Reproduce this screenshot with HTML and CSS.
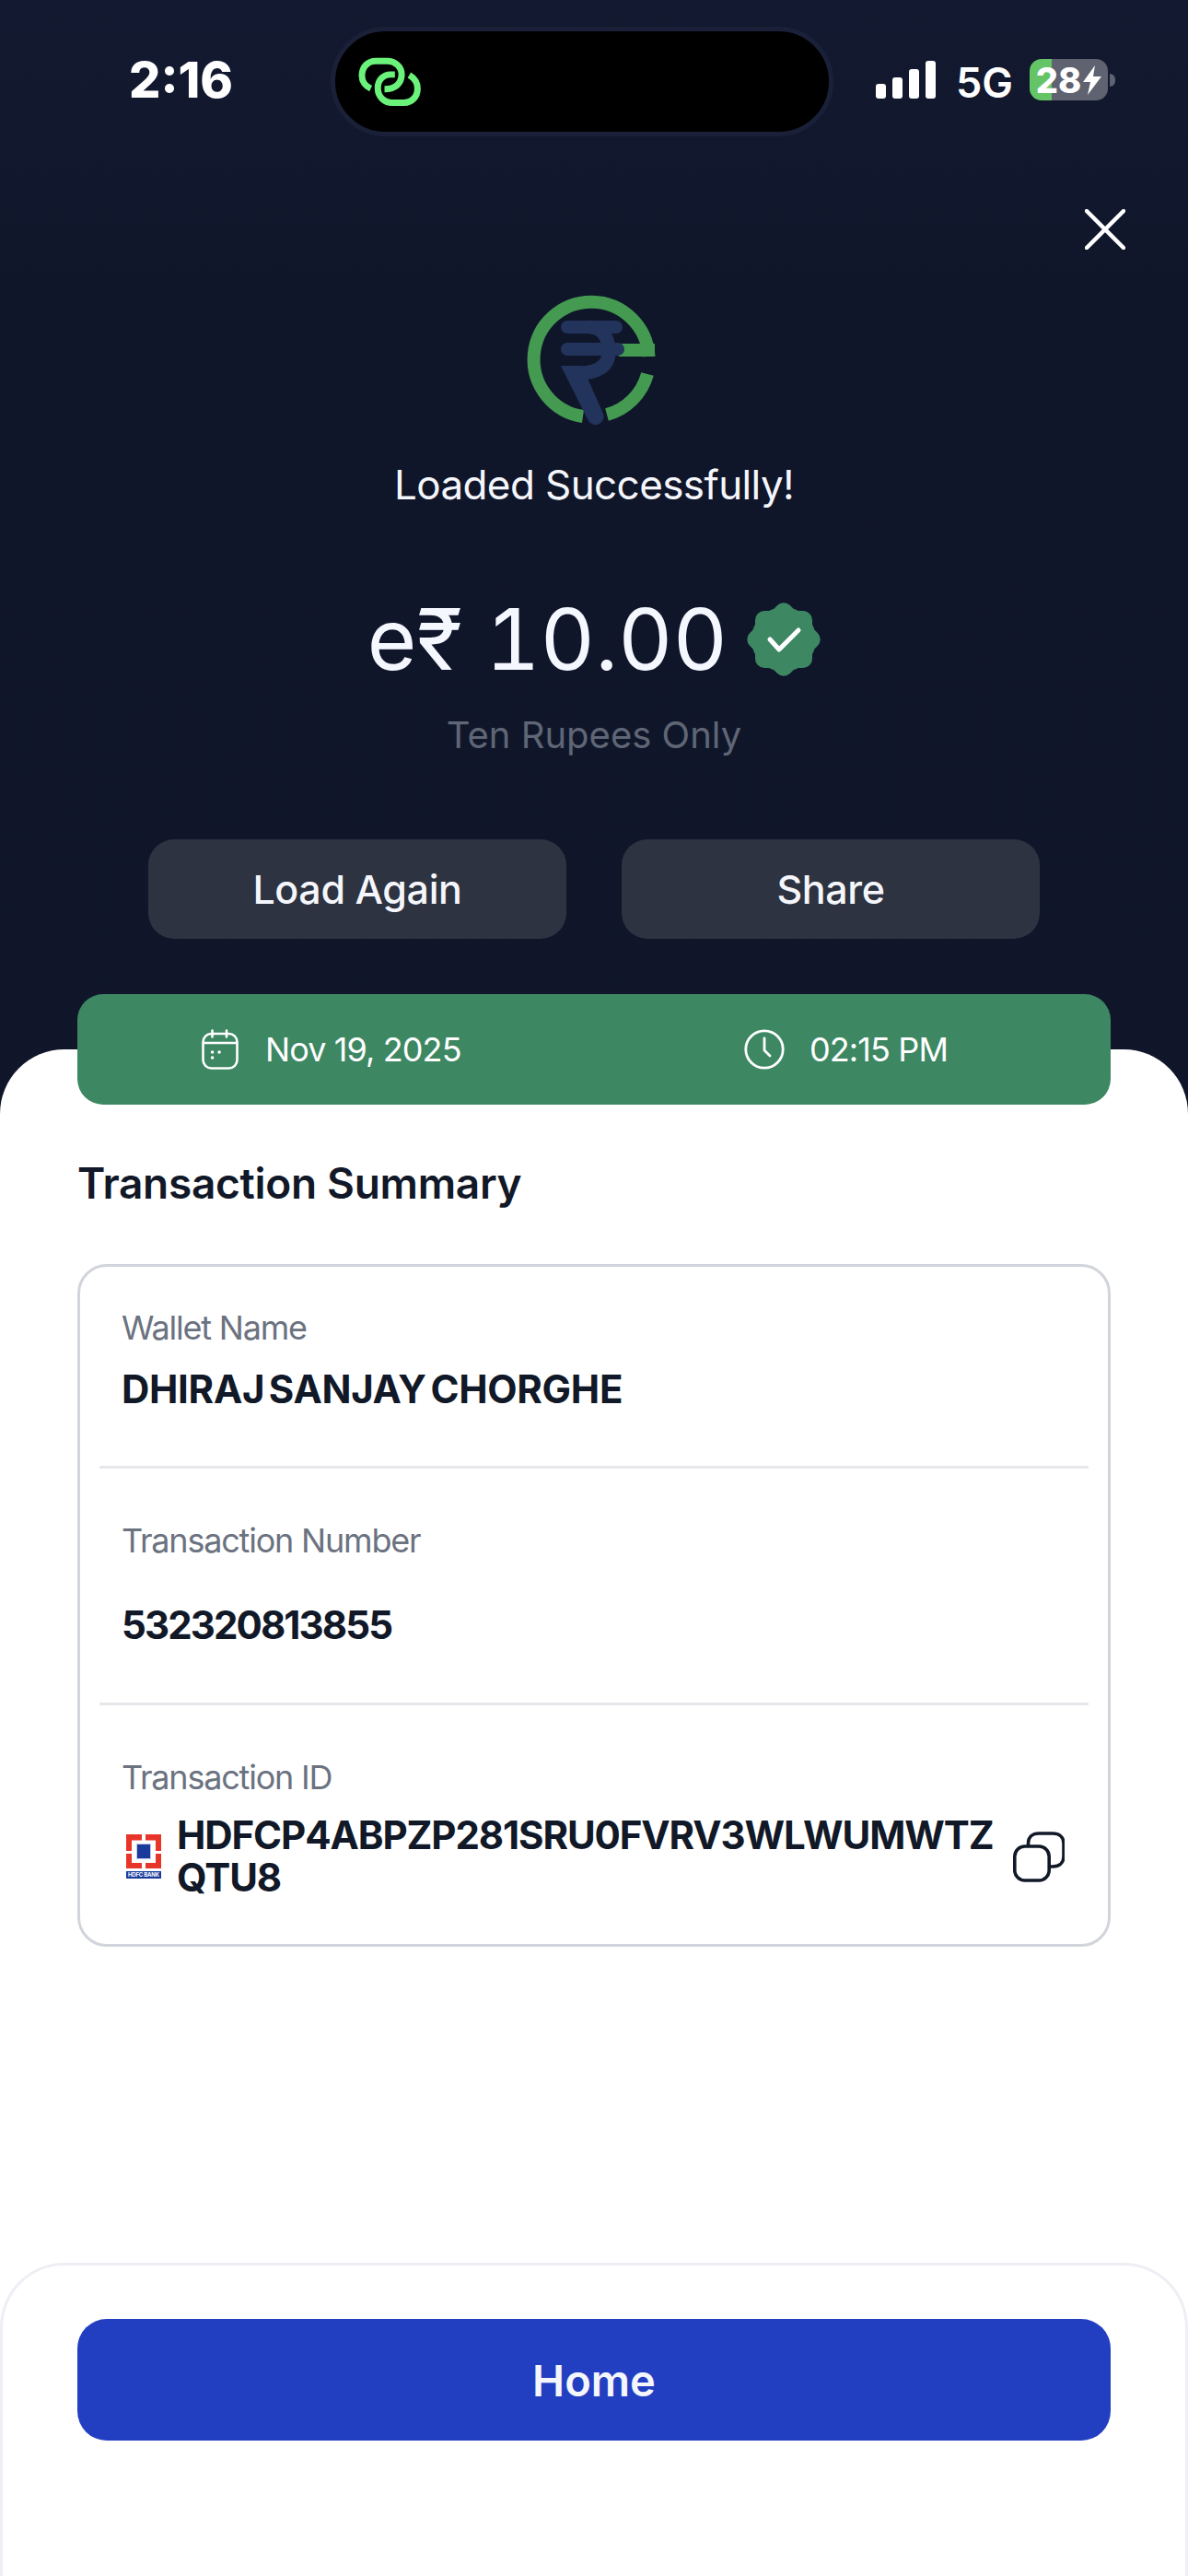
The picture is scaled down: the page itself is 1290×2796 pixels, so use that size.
FILE: index.html
```html
<!DOCTYPE html>
<html lang="en">

<head>
    <meta charset="UTF-8">
    <meta name="viewport" content="width=device-width, initial-scale=1.0">
    <title>Loaded Successfully</title>
    <link rel="stylesheet" href="styles.css">
</head>

<body>
    <div class="screen">
        <!-- Status bar -->
        <div class="status-bar">
            <span class="time">2:16</span>
            <div class="island">
                <svg class="link-icon" viewBox="140 120 220 170" fill="none" stroke="#6bf27a" stroke-width="21">
                    <path d="M187 228C170 220 158 204 158 186C158 158 176 138 204 138H240C268 138 288 158 288 182C288 210 268 230 232 230" />
                    <path d="M266 182H252C228 182 210 200 210 226C210 254 230 274 258 274H296C322 274 340 254 340 228C340 210 330 194 313 184" />
                </svg>
            </div>
            <div class="status-right">
                <div class="signal">
                    <span class="bar bar-1"></span>
                    <span class="bar bar-2"></span>
                    <span class="bar bar-3"></span>
                    <span class="bar bar-4"></span>
                </div>
                <span class="network">5G</span>
                <div class="battery">
                    <div class="battery-body">
                        <span class="battery-level">28</span>
                        <svg class="bolt" viewBox="0 0 20 32" fill="#fff">
                            <path d="M13 0L0 18H8L5 32L20 12H11Z" />
                        </svg>
                    </div>
                    <span class="battery-nub"></span>
                </div>
            </div>
        </div>

        <!-- Success header -->
        <div class="hero">
            <div class="close-row">
                <svg class="close-icon" viewBox="0 0 44 44" fill="none" stroke="#fff" stroke-width="4.5" stroke-linecap="round">
                    <path d="M2 2L42 42M42 2L2 42" />
                </svg>
            </div>
            <svg class="logo" viewBox="570 318 145 145" fill="none">
                <path d="M633 452A62.5 62.5 0 1 1 704.5 387" stroke="#439a50" stroke-width="14" />
                <path d="M703 406A62.5 62.5 0 0 1 659 450" stroke="#439a50" stroke-width="14" />
                <rect x="672" y="373" width="39" height="14" fill="#439a50" />
                <rect x="609" y="348" width="67" height="14" rx="7" fill="#22345c" />
                <rect x="609" y="372" width="69" height="14" rx="7" fill="#22345c" />
                <path d="M640 355C655 355 661 368 661 382C661 398 648 405 628 405" stroke="#22345c" stroke-width="15" />
                <path d="M609 397H632L655 449A9 9 0 0 1 638 455Z" fill="#22345c" />
            </svg>
            <p class="hero-title">Loaded Successfully!</p>
            <div class="amount-row">
                <span class="amount">e₹ 10.00</span>
                <svg class="verified" viewBox="0 0 80 80">
                    <g fill="#3d8763">
                        <circle cx="40" cy="40" r="35" />
                        <rect x="9" y="9" width="62" height="62" rx="10" />
                        <rect x="9" y="9" width="62" height="62" rx="10" transform="rotate(45 40 40)" />
                    </g>
                    <path d="M25 40L35 51L56 30" fill="none" stroke="#fff" stroke-width="5" stroke-linecap="round" stroke-linejoin="round" />
                </svg>
            </div>
            <p class="amount-words">Ten Rupees Only</p>
            <div class="hero-actions">
                <button class="ghost-btn">Load Again</button>
                <button class="ghost-btn">Share</button>
            </div>
        </div>

        <!-- White sheet -->
        <div class="sheet">
            <div class="date-bar">
                <div class="date-item date-item-day">
                    <svg class="calendar-icon" viewBox="0 0 40 44" fill="none" stroke="#fff" stroke-width="2.6" stroke-linecap="round">
                        <rect x="1.5" y="5" width="37" height="37.5" rx="9" />
                        <path d="M2 15H38M11.5 1.5V8.5M27 1.5V8.5" />
                        <path d="M11.5 25H11.7M19 25H19.2M11.5 31H11.7" stroke-width="3.4" />
                    </svg>
                    <span>Nov 19, 2025</span>
                </div>
                <div class="date-item date-item-time">
                    <svg class="clock-icon" viewBox="0 0 44 44" fill="none" stroke="#fff" stroke-width="2.8" stroke-linecap="round" stroke-linejoin="round">
                        <circle cx="22" cy="22" r="20.2" />
                        <path d="M22 10V23L28 29" />
                    </svg>
                    <span>02:15 PM</span>
                </div>
            </div>

            <h2 class="section-title">Transaction Summary</h2>

            <div class="summary-card">
                <div class="summary-row">
                    <div class="row-label">Wallet Name</div>
                    <div class="row-value row-name">DHIRAJ SANJAY CHORGHE</div>
                </div>
                <div class="summary-row row-number">
                    <div class="row-label">Transaction Number</div>
                    <div class="row-value">532320813855</div>
                </div>
                <div class="summary-row row-last">
                    <div class="row-label">Transaction ID</div>
                    <div class="txn-line">
                        <svg class="bank-logo" viewBox="0 0 38 48">
                            <path d="M0 0H17V6.5H6V18H0ZM21 0H38V18H32V6.5H21ZM0 21H6V31H17V37H0ZM38 21H32V31H21V37H38Z" fill="#e8352a" />
                            <rect x="11.5" y="10.5" width="15" height="16" fill="#1a3b9c" stroke="#c3c9e4" />
                            <rect x="0" y="40" width="38" height="8" fill="#1a3b9c" />
                            <text class="bank-name" x="19" y="46.4" text-anchor="middle" textLength="34">HDFC BANK</text>
                        </svg>
                        <div class="txn-id">HDFCP4ABPZP281SRU0FVRV3WLWUMWTZ<br>QTU8</div>
                        <svg class="copy-icon" viewBox="0 0 56 55" fill="none" stroke="#111827" stroke-width="3.6">
                            <path d="M16.5 16V13C16.5 6 21 2 28 2H43C50 2 55 6 55 13V27C55 34 50 38 43 38H39" />
                            <rect x="1.8" y="16" width="37.4" height="37" rx="11" />
                        </svg>
                    </div>
                </div>
            </div>

            <div class="footer-panel">
                <button class="home-btn">Home</button>
            </div>
        </div>
    </div>
</body>

</html>
```
FILE: styles.css
```css
* {
    margin: 0;
    padding: 0;
    box-sizing: border-box;
}

html,
body {
    width: 1290px;
    height: 2796px;
    overflow: hidden;
    font-family: Inter, "Liberation Sans", sans-serif;
}

.screen {
    width: 1290px;
    height: 2796px;
    display: flex;
    flex-direction: column;
    background: linear-gradient(180deg, #131930 0%, #10162a 320px, #111629 100%);
}

/* Status bar */

.status-bar {
    display: flex;
    align-items: flex-start;
    height: 190px;
    padding: 29px 0 0 140px;
}

.time {
    flex: none;
    width: 219px;
    margin-top: 32px;
    color: #fff;
    font-size: 54px;
    line-height: 52px;
    font-weight: 800;
}

.island {
    flex: none;
    width: 546px;
    height: 119px;
    background-color: #000;
    border: 5px solid #1a2038;
    border-radius: 60px;
    display: flex;
    align-items: flex-start;
    padding: 26px 0 0 23px;
}

.link-icon {
    width: 73px;
    height: 57px;
}

.status-right {
    display: flex;
    align-items: flex-start;
    margin-left: 46px;
    margin-top: 35px;
}

.signal {
    display: flex;
    align-items: flex-end;
    gap: 7px;
    height: 41px;
    margin-top: 2px;
}

.bar {
    width: 11px;
    background-color: #fff;
    border-radius: 3px;
}

.bar-1 {
    height: 16px;
}

.bar-2 {
    height: 23px;
}

.bar-3 {
    height: 32px;
}

.bar-4 {
    height: 41px;
}

.network {
    margin-left: 22px;
    margin-top: 3px;
    width: 80px;
    color: #fff;
    font-size: 45px;
    line-height: 45px;
    font-weight: 600;
}

.battery {
    display: flex;
    align-items: center;
}

.battery-body {
    width: 85px;
    height: 45px;
    border-radius: 13px;
    background: linear-gradient(90deg, #65c466 24px, #5f6270 24px);
    display: flex;
    align-items: center;
    justify-content: center;
    gap: 2px;
}

.battery-level {
    color: #fff;
    font-size: 38px;
    line-height: 38px;
    font-weight: 800;
}

.bolt {
    width: 20px;
    height: 32px;
}

.battery-nub {
    width: 6px;
    height: 14px;
    margin-left: 2px;
    background-color: #5f6270;
    border-radius: 0 6px 6px 0;
}

/* Hero */

.hero {
    display: flex;
    flex-direction: column;
    align-items: center;
    height: 949px;
}

.close-row {
    align-self: stretch;
    display: flex;
    justify-content: flex-end;
    padding: 37px 68px 0 0;
}

.close-icon {
    width: 44px;
    height: 44px;
}

.logo {
    width: 145px;
    height: 145px;
    margin-top: 47px;
    margin-right: 5px;
}

.hero-title {
    margin-top: 37px;
    color: #f5f6fc;
    font-size: 44px;
    line-height: 52px;
    font-weight: 400;
    letter-spacing: -0.6px;
}

.amount-row {
    display: flex;
    align-items: center;
    gap: 21px;
    margin-top: 87px;
}

.amount {
    color: #f5f7ff;
    font-size: 92px;
    line-height: 110px;
    font-weight: 400;
    font-variant-numeric: tabular-nums;
}

.verified {
    width: 80px;
    height: 80px;
}

.amount-words {
    margin-top: 25px;
    color: #5f6675;
    font-size: 40px;
    line-height: 48px;
}

.hero-actions {
    display: flex;
    gap: 60px;
    margin-top: 89px;
}

.ghost-btn {
    width: 454px;
    height: 108px;
    border: none;
    border-radius: 28px;
    background-color: #2d3340;
    color: #f5f6fc;
    font-family: inherit;
    font-size: 43px;
    font-weight: 500;
    letter-spacing: -0.4px;
}

/* Sheet */

.sheet {
    flex: 1;
    display: flex;
    flex-direction: column;
    background-color: #fff;
    border-radius: 70px 70px 0 0;
}

.date-bar {
    display: flex;
    align-items: center;
    height: 120px;
    margin: -60px 84px 0;
    padding-left: 135px;
    border-radius: 28px;
    background-color: #3d8763;
    color: #fff;
    font-size: 36px;
    letter-spacing: -0.9px;
}

.date-item {
    display: flex;
    align-items: center;
}

.date-item-day {
    gap: 29px;
    width: 589px;
}

.date-item-time {
    gap: 27px;
}

.calendar-icon {
    width: 40px;
    height: 44px;
}

.clock-icon {
    width: 44px;
    height: 44px;
}

.section-title {
    margin: 57px 84px 0;
    color: #111827;
    font-size: 46px;
    line-height: 56px;
    font-weight: 600;
    letter-spacing: -0.3px;
}

.summary-card {
    margin: 60px 84px 0;
    height: 741px;
    padding: 0 21px;
    border: 3px solid #d1d5db;
    border-radius: 32px;
}

.summary-row {
    height: 219px;
    padding: 44px 24px 0;
    border-bottom: 3px solid #e5e7eb;
}

.row-number {
    height: 257px;
    padding-top: 56px;
}

.row-last {
    padding-top: 56px;
    padding-right: 26px;
    border-bottom: none;
}

.row-label {
    color: #6b7280;
    font-size: 36px;
    line-height: 44px;
    letter-spacing: -1.2px;
}

.row-value {
    margin-top: 22px;
    color: #111827;
    font-size: 42px;
    line-height: 46px;
    font-weight: 700;
    letter-spacing: -1.9px;
}

.row-name {
    letter-spacing: -0.3px;
    word-spacing: -5px;
}

.row-number .row-value {
    margin-top: 47px;
}

.txn-line {
    display: flex;
    align-items: center;
    margin-top: 18px;
}

.bank-logo {
    flex: none;
    width: 38px;
    height: 48px;
    margin-left: 5px;
}

.bank-name {
    fill: #fff;
    font-size: 6px;
    font-weight: 700;
}

.txn-id {
    flex: 1;
    margin-left: 17px;
    color: #111827;
    font-size: 42px;
    line-height: 46px;
    font-weight: 700;
    letter-spacing: -1.1px;
    white-space: nowrap;
}

.copy-icon {
    flex: none;
    width: 56px;
    height: 55px;
}

.footer-panel {
    flex: 1;
    margin-top: 343px;
    padding-top: 58px;
    border: 3px solid #eeeef4;
    border-bottom: none;
    border-radius: 70px 70px 0 0;
    display: flex;
    flex-direction: column;
    align-items: center;
}

.home-btn {
    width: 1122px;
    height: 132px;
    border: none;
    border-radius: 32px;
    background-color: #233fc1;
    color: #f5f6fc;
    font-family: inherit;
    font-size: 47px;
    font-weight: 600;
}
```
